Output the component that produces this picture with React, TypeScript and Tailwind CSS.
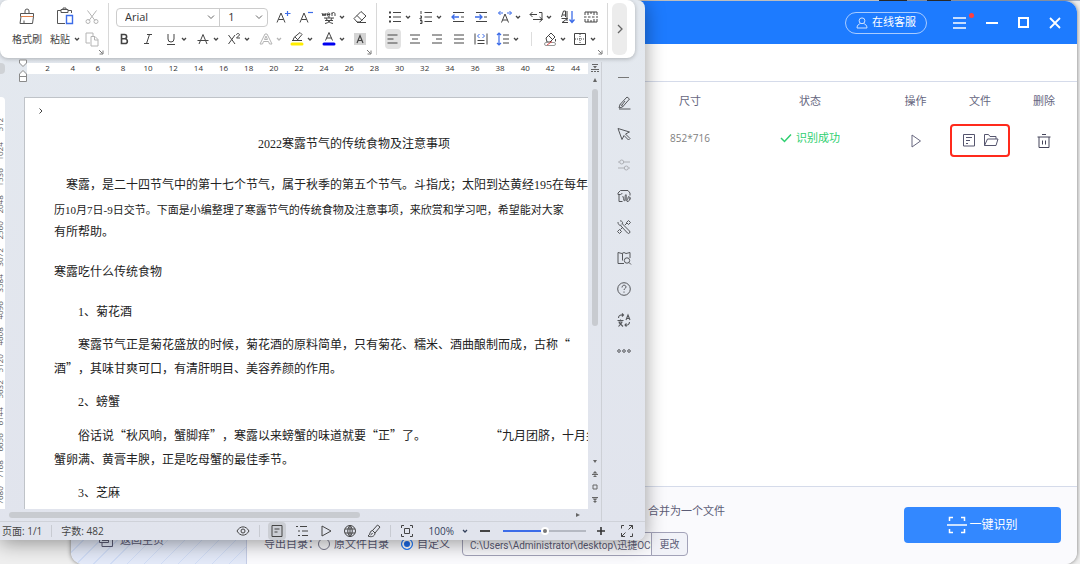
import type { ReactNode } from "react";
import clsx from "clsx";

const RULER = Array.from({ length: 22 }, (_, i) => (i + 1) * 2);
const SIDE_RULER = [512, 1024, 1536, 2048, 2560, 3072, 3584, 4096, 4608, 5120, 5632, 6144, 6656, 7168, 7680];

function Icon({ children, className }: { children: ReactNode; className?: string }) {
  return (
    <svg
      viewBox="0 0 16 16"
      fill="none"
      stroke="currentColor"
      strokeWidth="1"
      className={clsx("h-4 w-4 shrink-0", className)}
      aria-hidden="true"
    >
      {children}
    </svg>
  );
}

function Chevron() {
  return (
    <svg viewBox="0 0 6 6" fill="none" stroke="currentColor" strokeWidth="1.3" className="h-1.5 w-1.5 shrink-0" aria-hidden="true">
      <path d="M1 2l2 2 2-2" />
    </svg>
  );
}

function Tool({
  label,
  children,
  menu,
  active,
  faded,
}: {
  label: string;
  children: ReactNode;
  menu?: boolean;
  active?: boolean;
  faded?: boolean;
}) {
  return (
    <button
      aria-label={label}
      className={clsx(
        "flex h-5 shrink-0 items-center gap-0.5 rounded",
        active && "bg-[#e2e2e2]",
        faded && "text-[#b4b4b4]"
      )}
    >
      <Icon>{children}</Icon>
      {menu ? <Chevron /> : null}
    </button>
  );
}

function Launcher() {
  return (
    <svg viewBox="0 0 6 6" fill="none" stroke="#777" className="absolute right-1 bottom-0 h-1.5 w-1.5" aria-hidden="true">
      <path d="M1 1l3.5 3.5M5 1.5v3.5H1.5" />
    </svg>
  );
}

function SelectBox({ label, value, className }: { label: string; value: string; className: string }) {
  return (
    <div className={clsx("relative flex items-center", className)}>
      <select aria-label={label} className="h-full w-full appearance-none bg-transparent pl-2 text-[11px] text-[#333] outline-none">
        <option>{value}</option>
      </select>
      <svg viewBox="0 0 8 8" fill="none" stroke="#666" className="pointer-events-none absolute right-1 h-2 w-2" aria-hidden="true">
        <path d="M1 2.5l3 3 3-3" />
      </svg>
    </div>
  );
}

function Ribbon() {
  return (
    <div className="mr-2.5 flex h-[58px] shrink-0 rounded-lg bg-white py-[3px] text-[#444] shadow-[0_1px_4px_rgba(0,0,0,0.25)]">
      <div className="relative flex w-[109px] border-r border-[#d8d8d8] pt-1 pl-3 text-[10px] leading-5">
        <button className="flex w-[30px] flex-col items-center gap-1">
          <svg viewBox="0 0 18 18" fill="none" stroke="#555" className="h-[18px] w-[18px]" aria-hidden="true">
            <path d="M7 6.500V4a2 2 0 0 1 4 0v2.500M2.500 6.500h13M2.500 6.500v3h13v-3M3 9.500l-1 7h12.500l1-7M6 16.500v-3" />
            <path d="M3 9.500h12" stroke="#e0804a" />
          </svg>
          <span className="whitespace-nowrap">格式刷</span>
        </button>
        <button className="ml-2 flex flex-col items-center gap-1">
          <svg viewBox="0 0 18 18" fill="none" stroke="#555" className="h-[18px] w-[18px]" aria-hidden="true">
            <path d="M5 3.500H1.500v13H9M12 3.500h3.500V6M5 2.500h7v3H5zM7 2.500V1h3v1.500" />
            <path d="M10.500 8.500h6v8h-6z" stroke="#3c6ce8" strokeWidth="1.400" />
          </svg>
          <span className="flex items-center gap-1 whitespace-nowrap">
            粘贴
            <Chevron />
          </span>
        </button>
        <div className="ml-1 flex flex-col gap-0.5">
          <Tool label="剪切" faded>
            <path d="M3.500 1.500l7.500 10M12.500 1.500L5 11.500" />
            <circle cx="4" cy="12.500" r="2" />
            <circle cx="12" cy="12.500" r="2" />
          </Tool>
          <Tool label="复制" faded>
            <path d="M6 12H2V2h7v3M7 5.500h4l3 3V15H7zM10.500 5.500V9H14" />
          </Tool>
        </div>
        <Launcher />
      </div>

      <div className="relative flex w-[268px] flex-col gap-0.5 border-r border-[#d8d8d8] pt-1 pr-2 pl-[7px]">
        <div className="flex items-center justify-between">
          <div className="flex h-[19px] w-[152px] rounded border border-[#ccc]">
            <SelectBox label="字体" value="Arial" className="w-[103px]" />
            <SelectBox label="字号" value="1" className="w-[48px] border-l border-[#ccc]" />
          </div>
          <Tool label="增大字号">
            <path d="M2 13.500L6 4l4 9.500M3.500 10.500h5" />
            <path d="M10 4.500h5.500M12.500 2v5" stroke="#3c6ce8" strokeWidth="1.200" />
          </Tool>
          <Tool label="减小字号">
            <path d="M2 13.500L6 4l4 9.500M3.500 10.500h5" />
            <path d="M10 3.500h5" stroke="#3c6ce8" strokeWidth="1.200" />
          </Tool>
          <Tool label="拼音指南" menu>
            <path d="M1 4l1 3 1-2.500L4 7l1-3M6 5.500h3C9 3.500 6 3.500 6 5.500S8 7.500 9 6.500M11 7V3.500M11 5c0-2 3-2 3 0v2M8 7.500V9M3 9h10M5 9c1 3 4 5 7 5.500M11 9c-1 3-4 5-7 5.500M4 11.500h8" />
          </Tool>
          <Tool label="清除格式">
            <path d="M2 9.500L9 2.500l5 4.500-6 6H5zM5 6.500l5 5M5 13.500h9" />
          </Tool>
        </div>
        <div className="flex items-center justify-between">
          <Tool label="加粗">
            <path d="M5.500 3.500v9h3.500a2.300 2.300 0 0 0 0-4.700H5.500h3a2.100 2.100 0 0 0 0-4.300z" strokeWidth="1.600" />
          </Tool>
          <Tool label="倾斜">
            <path d="M7 3.500h5M4 12.500h5M9.500 3.500l-3 9" />
          </Tool>
          <Tool label="下划线" menu>
            <path d="M5 3v5a3 3 0 0 0 6 0V3M4 13.500h8" />
          </Tool>
          <Tool label="删除线" menu>
            <path d="M4 13l4-9.500 4 9.500M2.500 9.500h11" />
          </Tool>
          <Tool label="上标" menu>
            <path d="M2.500 4l6.500 9M9 4l-6.500 9M10.500 4c0-2 3-2 3 0L10.500 7h3.500" />
          </Tool>
          <Tool label="文字效果" menu faded>
            <path d="M2 13L7 3h2l5 10h-2.500l-1-2.500h-5l-1 2.500zM6.500 8.500L8 5l1.500 3.500z" />
          </Tool>
          <Tool label="突出显示" menu>
            <path d="M4 9.500l1-3 6-5 2 2-5 6zM3 9.500h10M6 6l3 3" />
            <path d="M3 13h10" stroke="#ffee00" strokeWidth="3" strokeLinecap="round" />
          </Tool>
          <Tool label="字体颜色" menu>
            <path d="M4.500 9.500L8 1.500l3.500 8M5.500 7h5" />
            <path d="M3 13h10" stroke="#0000f0" strokeWidth="3" strokeLinecap="round" />
          </Tool>
          <Tool label="字符底纹">
            <path d="M2 2h12v12H2z" fill="#d4d4d4" stroke="none" />
            <path d="M5 12l3-7.500L11 12M6 9.500h4" strokeWidth="1.200" />
          </Tool>
        </div>
        <Launcher />
      </div>

      <div className="relative flex w-[231px] flex-col gap-0.5 border-r border-[#d8d8d8] pt-1 pl-2">
        <div className="flex w-[214px] items-center justify-between pl-0.5">
          <Tool label="项目符号" menu>
            <path d="M6 3.500h8M6 8h8M6 12.500h8" />
            <path d="M2 3.500h2M2 8h2M2 12.500h2" strokeWidth="2" />
          </Tool>
          <Tool label="编号" menu>
            <path d="M6.500 3.500H14M6.500 8H14M6.500 12.500H14M3 2v3M2 7h1.500v2H2v1h2M2 11.500h2v3H2M2.500 13H4" />
          </Tool>
          <Tool label="减少缩进">
            <path d="M3 3.500h11M11 8h3M3 12.500h11" />
            <path d="M2 8h7M4.500 5.500L2 8l2.500 2.500" stroke="#3c6ce8" strokeWidth="1.300" />
          </Tool>
          <Tool label="增加缩进">
            <path d="M3 3.500h11M11 8h3M3 12.500h11" />
            <path d="M2 8h7M6.500 5.500L9 8l-2.500 2.500" stroke="#3c6ce8" strokeWidth="1.300" />
          </Tool>
          <Tool label="中文版式" menu>
            <path d="M4.500 13.500L8 5l3.500 8.500M5.500 11h5" />
            <path d="M1.500 4H6M10 4h4.500M3.500 2l-2 2 2 2M12.500 2l2 2-2 2" stroke="#3c6ce8" />
          </Tool>
          <Tool label="换行" menu>
            <path d="M9 5.500H2M4.500 3L2 5.500 4.500 8M11 3.500h3v7H5M11.500 8l3 2.500-3 2.500" />
          </Tool>
          <Tool label="排序">
            <path d="M1.500 8L3.500 2h2v6M2.500 6h3M1.500 9.500h6L2 13.500h6M7 2v10" />
            <path d="M12 2v11M9.500 10.500L12 13.500l2.500-3" stroke="#3c6ce8" strokeWidth="1.300" />
          </Tool>
          <Tool label="显示标记">
            <path d="M2 6V3h12v3M2 10v3h12v-3M5 3v3M8 3v2M11 3v3M5 13v-3M8 13v-2M11 13v-3M1 8h2.500M5 8h2.500M9 8h2.500M13 8h2" />
          </Tool>
        </div>
        <div className="flex items-center gap-1.5">
          <Tool label="左对齐" active>
            <path d="M2.500 4h10M2.500 8h6M2.500 12h10" />
          </Tool>
          <Tool label="居中">
            <path d="M3 4h10M5 8h6M3 12h10" />
          </Tool>
          <Tool label="右对齐">
            <path d="M3 4h10M7 8h6M3 12h10" />
          </Tool>
          <Tool label="两端对齐">
            <path d="M3 4h10M3 8h10M3 12h10" />
          </Tool>
          <Tool label="分散对齐">
            <path d="M2 2.500v11M14 2.500v11M4.500 9.500h7M4.500 12.500h7" />
            <path d="M6.500 3L4.500 5l2 2M9.500 3l2 2-2 2" stroke="#3c6ce8" />
          </Tool>
          <Tool label="行距" menu>
            <path d="M8 4h6M8 8h6M8 12h6" />
            <path d="M4 2v12M2 4l2-2 2 2M2 12l2 2 2-2" stroke="#3c6ce8" strokeWidth="1.200" />
          </Tool>
          <div className="mr-1 ml-1.5 h-3.5 w-px bg-[#ddd]" />
          <Tool label="底纹" menu>
            <path d="M4 7l5-5 4 4-5 5H5zM6.500 4.500l4 4M13.500 8v2.500" />
            <rect x="2.500" y="11.500" width="11" height="3" rx="1.500" stroke="#999" />
            <path d="M5 14l5-3.500" stroke="#e05050" />
          </Tool>
          <Tool label="边框" menu>
            <path d="M2.500 2.500h11v11h-11z" />
            <path d="M8 3v10M3 8h10" strokeDasharray="1 1" />
          </Tool>
        </div>
        <Launcher />
      </div>

      <button aria-label="更多" className="ml-1 flex w-[15px] items-center justify-center rounded-md bg-[#ececec]">
        <svg viewBox="0 0 8 10" fill="none" stroke="#666" strokeWidth="1.300" className="h-2.5 w-2" aria-hidden="true">
          <path d="M2 1l4 4-4 4" />
        </svg>
      </button>
    </div>
  );
}

// digits keep the half-width serif look, the rest is set in the CJK face
function Mixed({ text }: { text: string }) {
  return (
    <>
      {text.split(/([\d-]+)/).map((part, i) =>
        i % 2 ? (
          <span key={i} className="font-['Liberation_Serif',serif]">
            {part}
          </span>
        ) : (
          part
        )
      )}
    </>
  );
}

function Page() {
  return (
    <article className="min-w-0 flex-1 overflow-hidden border-t border-l border-[#bfc3c8] bg-white pl-[29px] font-['Noto_Sans_CJK_SC',sans-serif] text-xs leading-5 whitespace-nowrap text-[#222] [text-spacing-trim:space-all]">
      <div className="relative h-[35px]">
        <svg viewBox="0 0 6 8" fill="none" stroke="#444" className="absolute top-[9px] -left-4 h-2 w-1.5" aria-hidden="true">
          <path d="M1.500 1.500L4 4 1.500 6.500" />
        </svg>
      </div>
      <h1 className="pl-[204px]">
        <Mixed text="2022寒露节气的传统食物及注意事项" />
      </h1>
      <p className="mt-5 pl-3">
        <Mixed text="寒露，是二十四节气中的第十七个节气，属于秋季的第五个节气。斗指戊；太阳到达黄经195在每年" />
      </p>
      <p className="mt-1 text-[11px] leading-5">
        <Mixed text="历10月7日-9日交节。下面是小编整理了寒露节气的传统食物及注意事项，来欣赏和学习吧，希望能对大家" />
      </p>
      <p className="mt-px">有所帮助。</p>
      <h2 className="mt-5">寒露吃什么传统食物</h2>
      <h3 className="mt-5 pl-6">
        <Mixed text="1、菊花酒" />
      </h3>
      <p className="mt-3 pl-6">寒露节气正是菊花盛放的时候，菊花酒的原料简单，只有菊花、糯米、酒曲酿制而成，古称“</p>
      <p className="mt-1">酒”，其味甘爽可口，有清肝明目、美容养颜的作用。</p>
      <h3 className="mt-[13px] pl-6">
        <Mixed text="2、螃蟹" />
      </h3>
      <p className="mt-[13px] pl-6">
        俗话说“秋风响，蟹脚痒”，寒露以来螃蟹的味道就要“正”了。
        <span className="ml-16">“九月团脐，十月尖</span>
      </p>
      <p className="mt-1">蟹卵满、黄膏丰腴，正是吃母蟹的最佳季节。</p>
      <h3 className="mt-[13px] pl-6">
        <Mixed text="3、芝麻" />
      </h3>
    </article>
  );
}

function SidePanel() {
  return (
    <aside className="mt-1 flex w-11 shrink-0 flex-col items-center border-l border-[#cdd0d6] pt-[5px] text-[#55575b]">
      <button aria-label="收起" className="flex h-5 items-center">
        <span className="block h-px w-[11px] bg-[#777]" />
      </button>
      <SideButton label="编辑">
        <path d="M3 14h11.500M3 13l1-3.500 7-7.500 2.500 2-7 8zM4.500 9.500L7 11.500M9 6l-3 4" />
      </SideButton>
      <SideButton label="选择">
        <path d="M2 2.500l11.500 3.500-4 2 4.500 4.500-1.500 1.500L8 9.500l-2 4z" />
      </SideButton>
      <SideButton label="设置" faded>
        <path d="M2 5h1.500M8 5h6M2 11h6M12.500 11H14" />
        <circle cx="5.700" cy="5" r="2" />
        <circle cx="10.300" cy="11" r="2" />
      </SideButton>
      <SideButton label="图库">
        <path d="M4.500 6.500H2V5l2.500-2.500H12L14 5v2.500M4.500 6.500C5.500 6.500 6 5.500 6 5M3 7v6.500h3.500M6.500 8c1 0 1 5 2 5s0-6 1.500-6.500c1 0-.5 6.500.5 6.500s1.500-5 2.500-4.500-.5 3 .5 3 1-1 1-2M11 13.500c1.500 0 2.500-1 3-2" />
      </SideButton>
      <SideButton label="工具">
        <path d="M6 4.500l7.500 7.500a1.400 1.400 0 0 1-2 2L4.500 6.500M2 3c0 2.500 1.500 4 3.500 3M4 1.800c2 0 3 1.500 2.500 3M7 8l-2.500 2.500M9 6l2-2" />
        <path d="M3.500 10.500l2 2-2 2-2-2zM12.500 1.500l2 2-2 2-2-2z" />
      </SideButton>
      <SideButton label="查找">
        <path d="M8 13.500H2V2.500l4 1 2-1 2 1 4-1V8M6.500 3.500v7" />
        <circle cx="11" cy="10.500" r="2.700" />
        <path d="M13 12.500l2 2" />
      </SideButton>
      <SideButton label="帮助">
        <circle cx="8" cy="8" r="6.300" />
        <path d="M6 6.500c0-3 4-3 4-.5 0 1.500-2 1.500-2 3M8 10.500v1.200" />
      </SideButton>
      <SideButton label="翻译">
        <path d="M2.500 6c0-2.500 2-3.500 5-3M6 1.500l1.500 1.500L6 4.500M13.500 10c0 2.500-2 3.500-4.500 3.200M10.500 11.500L9 13l1.500 1.500M10 8l2-5 2 5M10.500 6.500h3M1.500 8.500h6M4.500 7.500v1M2.500 10h4M2.500 14.500l3.500-4M3 10.500l4 4" strokeWidth="1.100" />
      </SideButton>
      <SideButton label="更多">
        <circle cx="3" cy="8" r="1.300" />
        <circle cx="8" cy="8" r="1.300" />
        <circle cx="13" cy="8" r="1.300" />
      </SideButton>
    </aside>
  );
}

function SideButton({ label, children, faded }: { label: string; children: ReactNode; faded?: boolean }) {
  return (
    <button aria-label={label} className={clsx("flex h-[31px] items-center", faded && "text-[#aeb0b5]")}>
      <Icon>{children}</Icon>
    </button>
  );
}

function StatusBar() {
  return (
    <footer className="flex h-[19px] shrink-0 items-center border-t border-[#cfd2d9] pr-2.5 pl-0.5 text-[10px] text-[#444]">
      <span>页面: 1/1</span>
      <div className="mx-[9px] h-3 w-px bg-[#c8cbd2]" />
      <span>字数: 482</span>
      <div className="ml-auto flex items-center gap-2">
        <button aria-label="护眼模式">
          <Icon>
            <path d="M2 8c3-5.500 9-5.500 12 0-3 5.500-9 5.500-12 0z" />
            <circle cx="8" cy="8" r="2" />
          </Icon>
        </button>
        <div className="h-3 w-px bg-[#c8cbd2]" />
        <button aria-label="页面视图" className="flex h-[18px] w-[18px] items-center justify-center rounded bg-[#cbced4]">
          <Icon>
            <path d="M3 2.500h10v11H3zM5.500 6h5M5.500 9h3" />
          </Icon>
        </button>
        <button aria-label="大纲视图">
          <Icon>
            <path d="M2 3.500h2M6 3.500h7M4 8h2M8 8h6M4 12.500h2M8 12.500h6" />
          </Icon>
        </button>
        <button aria-label="阅读视图">
          <Icon>
            <path d="M4 3l9 5-9 5z" />
          </Icon>
        </button>
        <button aria-label="网页视图">
          <Icon>
            <circle cx="8" cy="8" r="5.500" />
            <path d="M8 2.500v11M3 6h10M3 10h10M8 2.500c-3 3-3 8 0 11M8 2.500c3 3 3 8 0 11" />
          </Icon>
        </button>
        <button aria-label="写作模式">
          <Icon>
            <path d="M6.500 7.500l5-5.500 2.500 2-5 6zM6.500 7.500c-3 0-2 4.500-4.500 5.500 3 1.500 7 .5 7-3zM4.500 12c1-.5 1.500-1 2-2" />
          </Icon>
        </button>
        <div className="h-3 w-px bg-[#c8cbd2]" />
        <button aria-label="适应窗口">
          <Icon>
            <path d="M2.500 5V2.500H5M11 2.500h2.500V5M13.500 11v2.500H11M5 13.500H2.500V11M5.500 5.500h5v5h-5z" />
          </Icon>
        </button>
        <button className="ml-1.5 flex items-center gap-2 text-[#33405c]">
          100%
          <Chevron />
        </button>
        <button aria-label="缩小" className="ml-1 flex h-4 w-[11px] items-center">
          <span className="block h-0.5 w-2.5 bg-[#444]" />
        </button>
        <input
          type="range"
          aria-label="缩放"
          defaultValue={50}
          className="ml-1 h-2 w-[83px] appearance-none bg-transparent [&::-webkit-slider-runnable-track]:h-0.5 [&::-webkit-slider-runnable-track]:bg-[linear-gradient(to_right,#3c6ce8_50%,#b5b9c2_50%)] [&::-webkit-slider-thumb]:-mt-[3px] [&::-webkit-slider-thumb]:h-2 [&::-webkit-slider-thumb]:w-2 [&::-webkit-slider-thumb]:appearance-none [&::-webkit-slider-thumb]:rounded-full [&::-webkit-slider-thumb]:border-2 [&::-webkit-slider-thumb]:border-white [&::-webkit-slider-thumb]:bg-[#777]"
        />
        <button aria-label="放大" className="ml-0.5 flex h-4 w-[11px] items-center">
          <svg viewBox="0 0 10 10" stroke="#333" strokeWidth="1.600" className="h-2.5 w-2.5" aria-hidden="true">
            <path d="M1 5h8M5 1v8" />
          </svg>
        </button>
        <button aria-label="全屏" className="ml-1">
          <Icon>
            <path d="M2.500 5.500v-3H5M13.500 10.500v3H11M9.500 6.500l4-4M10 2.500h3.500V6M6.500 9.500l-4 4M2.500 10v3.500H6" />
          </Icon>
        </button>
      </div>
    </footer>
  );
}

function VerticalScroll() {
  return (
    <div className="flex w-[13px] shrink-0 flex-col items-center pt-[5px] text-[#666]">
      <svg viewBox="0 0 8 10" fill="currentColor" className="h-2.5 w-2" aria-hidden="true">
        <path d="M1 1h6v1H1zM2 3h4L4 5.500zM0 6h8v1H0zM0 8h2v1H0zM3 8h2v1H3zM6 8h2v1H6z" />
      </svg>
      <svg viewBox="0 0 6 6" fill="currentColor" className="mt-1 h-1.5 w-1.5" aria-hidden="true">
        <path d="M3 1l2 4H1z" />
      </svg>
      <div className="mt-1.5 h-[237px] w-1.5 rounded-full bg-[#c8cbd0]" />
      <svg viewBox="0 0 6 48" fill="currentColor" className="mt-auto mb-1 h-12 w-1.5" aria-hidden="true">
        <path d="M1 3h4L3 6zM3 14l2.500 2.500h-5zM0 17h6v1H0zM3 18l2 2H1zM0 40h6v1H0zM3 44l2.500-2.500h-5zM3 46l2-2H1z" />
        <path d="M1 28h4v4H1z" fill="none" stroke="currentColor" />
      </svg>
    </div>
  );
}

function EditorWindow() {
  return (
    <section className="absolute top-0 bottom-6 left-0 flex w-[645px] flex-col overflow-hidden rounded-r-lg bg-linear-to-b from-[#e4e9ef] to-[#e1e4ed] font-['Open_Sans','Noto_Sans_CJK_SC',sans-serif]">
      <Ribbon />
      <div className="flex min-h-0 flex-1">
        <div className="flex min-w-0 flex-1 flex-col">
          <div className="flex min-h-0 flex-1">
            <div className="flex min-w-0 flex-1 flex-col">
              <div className="flex h-[39px] shrink-0 pt-[5px]">
                <div className="relative w-[27px] shrink-0">
                  <span className="block h-[11px] w-[5px] rounded-r bg-[#cfd2d6]" />
                  <svg viewBox="0 0 8 24" fill="white" stroke="#8a8a8a" className="absolute -top-1 left-[19px] h-6 w-2" aria-hidden="true">
                    <path d="M.5 1h7v3L4 7.500.5 4zM4 11.500L7.500 15v7.500h-7V15zM.5 17.500h7" />
                  </svg>
                </div>
                <div className="flex h-[11px] min-w-0 flex-1 bg-white pl-2 text-[8px] leading-[10px] text-[#333]">
                  {RULER.map((n) => (
                    <span key={n} className="flex-1 text-center">
                      {n}
                    </span>
                  ))}
                </div>
              </div>
              <div className="flex min-h-0 flex-1">
                <div className="mr-[19px] flex w-[5px] shrink-0 flex-col items-end overflow-hidden rounded-tr-sm bg-white pt-3.5 text-[8px] leading-[10px] text-[#555]">
                  {SIDE_RULER.map((n) => (
                    <span key={n} className="flex w-2.5 flex-1 rotate-180 items-center justify-center [writing-mode:vertical-rl]">
                      {n}
                    </span>
                  ))}
                </div>
                <Page />
              </div>
            </div>
            <VerticalScroll />
          </div>
          <div className="flex h-3 shrink-0 items-center pl-[9px]">
            <div className="h-1.5 w-[351px] rounded-full bg-[#c8cbd0]" />
            <svg viewBox="0 0 6 6" fill="#666" className="mr-5 ml-auto h-1.5 w-1.5" aria-hidden="true">
              <path d="M1 1l4 2-4 2z" />
            </svg>
          </div>
        </div>
        <SidePanel />
      </div>
      <StatusBar />
    </section>
  );
}

function TitleBar() {
  return (
    <header className="flex h-[43px] shrink-0 items-center justify-end bg-[#1d7bff] pr-4 text-white">
      <button className="mr-[26px] flex h-[22px] w-[82px] items-center justify-center gap-1 rounded-full border border-[#a9ccff] text-[11px]">
        <svg viewBox="0 0 12 12" fill="none" stroke="#cfe2ff" className="h-3 w-3" aria-hidden="true">
          <circle cx="6" cy="3.800" r="2.900" />
          <path d="M1 11c0-3 2-4 3.500-4.500M11 11c0-3-2-4-3.500-4.500M1 11h10" />
        </svg>
        在线客服
      </button>
      <button aria-label="菜单" className="relative mr-5">
        <svg viewBox="0 0 13 12" stroke="white" strokeWidth="1.500" className="h-3 w-[13px]" aria-hidden="true">
          <path d="M0 1h13M0 6h13M0 11h13" />
        </svg>
        <span className="absolute -top-1 -right-2 h-[5px] w-[5px] rounded-full bg-[#ff4040]" />
      </button>
      <button aria-label="最小化" className="mr-5 flex h-3 items-center">
        <span className="block h-0.5 w-3 bg-white" />
      </button>
      <button aria-label="最大化" className="mr-5 h-[11px] w-[11px] border-2 border-white" />
      <button aria-label="关闭">
        <svg viewBox="0 0 12 12" stroke="white" strokeWidth="1.800" className="h-3 w-3" aria-hidden="true">
          <path d="M1 1l10 10M11 1L1 11" />
        </svg>
      </button>
    </header>
  );
}

function FileTable() {
  return (
    <table className="w-full table-fixed text-center text-[11px] text-[#66667e]">
      <thead>
        <tr className="h-[38px]">
          <td />
          <th className="w-24 font-normal">尺寸</th>
          <th className="w-36 font-normal">状态</th>
          <th className="w-[67px] font-normal">操作</th>
          <th className="w-[62px] font-normal">文件</th>
          <th className="w-[66px] font-normal">删除</th>
        </tr>
      </thead>
      <tbody>
        <tr className="h-10">
          <td />
          <td className="pb-1 text-[10px] text-[#808080]">852*716</td>
          <td className="pb-1 text-[#2ecf70]">
            <span className="flex items-center justify-center gap-1">
              <svg viewBox="0 0 12 10" fill="none" stroke="currentColor" strokeWidth="1.500" className="h-2.5 w-3" aria-hidden="true">
                <path d="M1 5l3.500 3.500L11 1.500" />
              </svg>
              识别成功
            </span>
          </td>
          <td>
            <button aria-label="开始" className="align-middle">
              <Icon>
                <path d="M4 2l8.500 6L4 14z" />
              </Icon>
            </button>
          </td>
          <td>
            <div className="mx-auto flex h-[33px] w-[60px] items-center justify-center gap-1.5 rounded-sm border-2 border-[#ff2a1c] text-[#55556e]">
              <button aria-label="打开文件">
                <Icon>
                  <path d="M2.500 2.500h11v11.500h-11zM5 5.500h6M5 8.500h4M5 11.500h2" />
                </Icon>
              </button>
              <button aria-label="打开文件夹">
                <Icon>
                  <path d="M1.500 13.500v-11h4l1.500 2h6V7M1.500 13.500l3-6.500H15l-2 6.500z" />
                </Icon>
              </button>
            </div>
          </td>
          <td>
            <button aria-label="删除" className="align-middle text-[#44445a]">
              <Icon>
                <path d="M1.500 4h13M6 1.500h4M3 4v10.500h10V4M6.500 7.500v4M9.500 7.500v4" />
              </Icon>
            </button>
          </td>
        </tr>
      </tbody>
    </table>
  );
}

function ExportBar() {
  return (
    <footer className="flex h-[78px] shrink-0 items-start border-t border-[#d5dbea] bg-[#fafafd] pr-4 pl-[17px] text-[11px] text-[#5c5c76]">
      <div>
        <p className="mt-[14px] pl-96 leading-5">合并为一个文件</p>
        <div className="mt-[11px] flex h-6 items-center">
          <span className="w-[54px] whitespace-nowrap">导出目录：</span>
          <label className="flex items-center gap-1 whitespace-nowrap">
            <input type="radio" name="dir" className="h-3 w-3 appearance-none rounded-full border border-[#77778c]" />
            原文件目录
          </label>
          <label className="ml-3 flex items-center gap-1 whitespace-nowrap">
            <input
              type="radio"
              name="dir"
              defaultChecked
              className="h-3 w-3 appearance-none rounded-full border border-[#1d7bff] bg-[#1d6be8] ring-2 ring-white ring-inset"
            />
            自定义
          </label>
          <input
            type="text"
            aria-label="导出目录"
            defaultValue="C:\Users\Administrator\desktop\迅捷OCR文"
            className="ml-3 h-6 w-[190px] rounded-l border border-[#a2a2b8] bg-transparent pl-[7px] font-['Roboto','Noto_Sans_CJK_SC',sans-serif] text-[10px]"
          />
          <button className="-ml-px h-6 w-[37px] rounded-r border border-[#a2a2b8] bg-[#f1f2f8] text-[10px]">更改</button>
        </div>
      </div>
      <button className="mt-5 ml-auto flex h-9 w-[157px] items-center justify-center gap-0.5 rounded bg-[#3388ff] text-xs text-white">
        <svg viewBox="0 0 20 18" fill="none" stroke="white" strokeWidth="1.500" className="h-[18px] w-5" aria-hidden="true">
          <path d="M2.500 5V1.500H6M14 1.500h3.500V5M17.500 13v3.500H14M6 16.500H2.500V13M0 9h20" />
        </svg>
        一键识别
      </button>
    </footer>
  );
}

function OcrWindow() {
  return (
    <section className="absolute top-px right-[3px] bottom-0 left-[71px] flex flex-col overflow-hidden rounded-xl bg-white font-['Open_Sans','Noto_Sans_CJK_SC',sans-serif] shadow-[0_0_4px_rgba(0,0,0,0.5)]">
      <TitleBar />
      <div className="flex min-h-0 flex-1">
        <nav className="flex w-44 shrink-0 flex-col justify-end border-r border-[#c5cde6] bg-[repeating-linear-gradient(135deg,#e3e9f8_0_11px,#d0dcf5_11px_12px)] pb-3.5">
          <a href="#home" className="flex items-center gap-1.5 pl-[27px] text-[11px] leading-5 text-[#5c5c76]">
            <Icon>
              <path d="M1.500 2.500h9v8h-9zM4 11v3.500h10.500V5H11M4 8.500h6" />
            </Icon>
            返回主页
          </a>
        </nav>
        <main className="flex min-w-0 flex-1 flex-col">
          <div className="h-[38px] shrink-0 border-b border-[#d5dbea]" />
          <div className="flex-1">
            <FileTable />
          </div>
          <ExportBar />
        </main>
      </div>
    </section>
  );
}

export default function App() {
  return (
    <div className="relative min-h-screen overflow-hidden bg-[#efefef]">
      <div className="ml-auto flex h-px w-[201px] gap-5 bg-[#a8b4c8]">
        <span className="h-px w-7 bg-[#333]" />
        <span className="h-px w-6 bg-[#333]" />
      </div>
      <OcrWindow />
      <div className="absolute top-0 bottom-6 left-0 w-[645px] rounded-r-lg shadow-[0_3px_20px_rgba(0,0,0,0.4)]" />
      <EditorWindow />
    </div>
  );
}
